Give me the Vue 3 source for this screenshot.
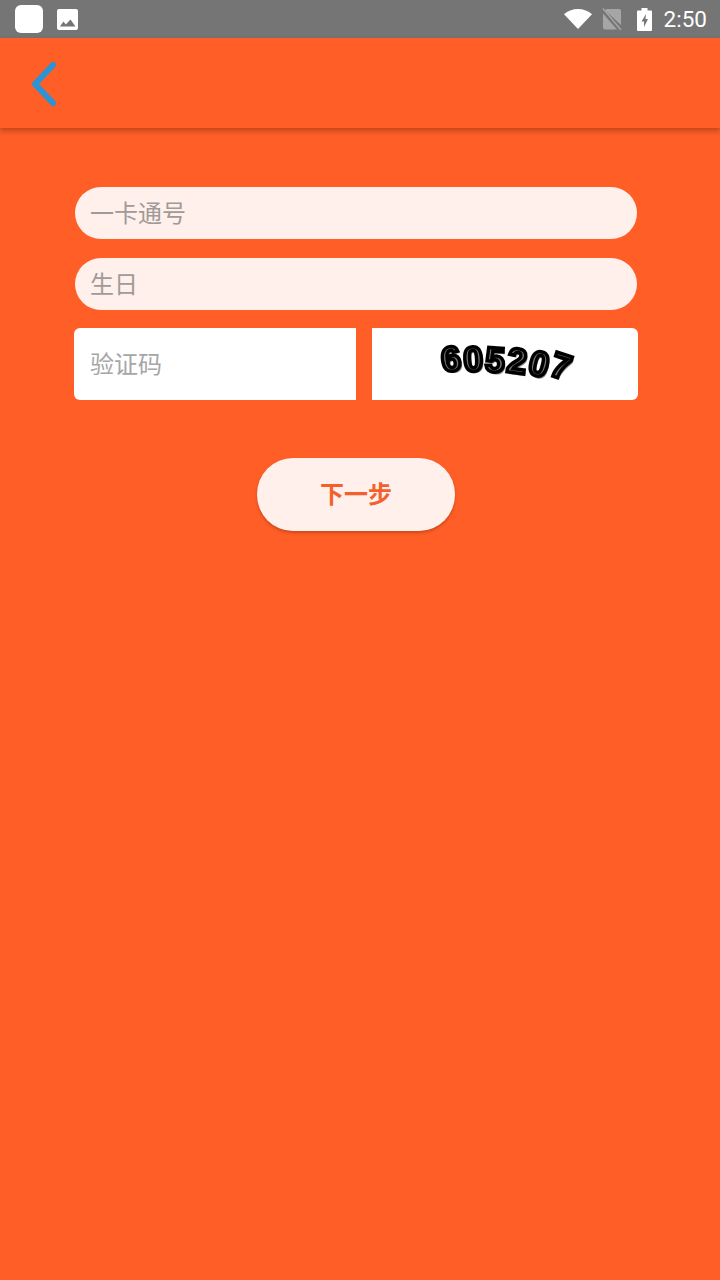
<script setup>
const digits = [
  { c: '6', r: -8, y: 0 },
  { c: '0', r: -4, y: 0 },
  { c: '5', r: 4, y: 1 },
  { c: '2', r: 8, y: 2 },
  { c: '0', r: 14, y: 5 },
  { c: '7', r: 18, y: 7 },
]
</script>

<template>
  <div class="page">
    <div class="status">
      <div class="status-left">
        <span class="app-square"></span>
        <svg class="img-icon" viewBox="0 0 21 21" width="21" height="21">
          <path fill="#fff" fill-rule="evenodd" d="M2 0h17a2 2 0 0 1 2 2v17a2 2 0 0 1-2 2H2a2 2 0 0 1-2-2V2a2 2 0 0 1 2-2zM3 17.500h15.500L13.500 10.500 8.800 15.500 6.500 12.500z" />
        </svg>
      </div>
      <div class="status-right">
        <svg class="wifi" viewBox="0 0 28 20" width="28" height="20">
          <path fill="#fff" d="M14 20 0 5.200C3.600 2 8.600 0 14 0s10.400 2 14 5.200z" />
        </svg>
        <svg class="sim" viewBox="0 0 20 24" width="20" height="24">
          <path fill="#a6a6a6" d="M3 3.500 4.500 2H17a2 2 0 0 1 2 2v14L3.500 3.800zM1 6.500l14 16H3a2 2 0 0 1-2-2z" />
          <path stroke="#a6a6a6" stroke-width="1.500" d="M1 1.500 19 23" />
        </svg>
        <svg class="battery" viewBox="0 0 15 23" width="15" height="23">
          <path fill="#fff" fill-rule="evenodd" d="M4.500 0h6v2.500H14a1 1 0 0 1 1 1V22a1 1 0 0 1-1 1H1a1 1 0 0 1-1-1V3.500a1 1 0 0 1 1-1h3.500zM9 6 4.500 13.500h2.500V19l4-8H8.500z" />
        </svg>
        <span class="time">2:50</span>
      </div>
    </div>

    <header class="appbar">
      <svg class="back" viewBox="0 0 30 48" width="30" height="48">
        <path d="M25 6 7 25l18 19" fill="none" stroke="#2b93d6" stroke-width="6" stroke-linecap="round" stroke-linejoin="round" />
      </svg>
    </header>

    <main class="form">
      <div class="pill">一卡通号</div>
      <div class="pill">生日</div>
      <div class="code-row">
        <div class="code-input">验证码</div>
        <div class="code-image">
          <div class="captcha">
            <span
              v-for="(d, i) in digits"
              :key="i"
              class="digit"
              :style="{ transform: `translateY(${d.y}px) rotate(${d.r}deg)` }"
            >{{ d.c }}</span>
          </div>
        </div>
      </div>
      <button class="next">下一步</button>
    </main>
  </div>
</template>

<style>
html, body { margin: 0; padding: 0; }
</style>

<style scoped>
.page {
  width: 720px;
  height: 1280px;
  background: #ff5e26;
  display: flex;
  flex-direction: column;
  overflow: hidden;
  font-family: "Noto Sans CJK SC", "Noto Sans", sans-serif;
}
.status {
  height: 38px;
  background: #757575;
  display: flex;
  justify-content: space-between;
  align-items: center;
  flex-shrink: 0;
}
.status-left {
  display: flex;
  align-items: center;
  gap: 14px;
  padding-left: 15px;
}
.app-square {
  width: 28px;
  height: 28px;
  background: #fff;
  border-radius: 6px;
}
.status-right {
  display: flex;
  align-items: center;
  padding-right: 13px;
}
.sim { margin-left: 10px; }
.battery { margin-left: 15px; }
.time {
  margin-left: 12px;
  font-family: Roboto, sans-serif;
  font-size: 22.500px;
  line-height: 38px;
  color: #fff;
}
.appbar {
  height: 90px;
  background: #ff5e26;
  box-shadow: 0 3px 5px rgba(120, 40, 10, 0.45);
  display: flex;
  align-items: center;
  padding-left: 28px;
  flex-shrink: 0;
  position: relative;
}
.form {
  display: flex;
  flex-direction: column;
  padding: 59px 82px 0 73.5px;
}
.pill {
  height: 52px;
  margin: 0 1px 19px 1.5px;
  background: #fff0ec;
  border-radius: 26px;
  padding-left: 15px;
  padding-bottom: 3px;
  box-sizing: border-box;
  font-size: 24px;
  line-height: 50px;
  color: #a09a98;
}
.code-row {
  display: flex;
  gap: 16px;
  height: 72px;
  margin-top: -1px;
}
.code-input {
  width: 282.500px;
  background: #fff;
  border-radius: 6px 0 0 6px;
  padding-left: 16.500px;
  box-sizing: border-box;
  font-size: 24px;
  line-height: 70px;
  color: #a6a6a6;
}
.code-image {
  width: 266px;
  background: #fff;
  border-radius: 0 6px 6px 0;
  display: flex;
  align-items: center;
  justify-content: center;
}
.captcha {
  display: flex;
  margin-left: 1px;
  margin-top: -11px;
  filter: blur(0.7px);
}
.digit {
  display: block;
  width: 22px;
  text-align: center;
  font-family: "Liberation Sans", sans-serif;
  font-weight: 700;
  font-size: 35px;
  line-height: 36px;
  color: #777;
  -webkit-text-stroke: 3.500px #000;
  text-shadow: 2px 2px 0 #8a8a8a;
}
.next {
  align-self: flex-start;
  margin: 58px 0 0 183.5px;
  width: 198px;
  height: 73px;
  border: none;
  border-radius: 36px;
  background: #fff0ec;
  box-shadow: 0 2px 3px rgba(130, 45, 10, 0.4);
  font-family: inherit;
  font-size: 24px;
  font-weight: 700;
  line-height: 69px;
  color: #f4602c;
  padding: 0 0 4px;
}
</style>
